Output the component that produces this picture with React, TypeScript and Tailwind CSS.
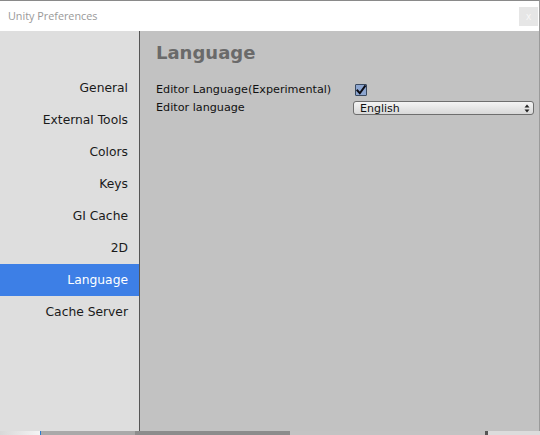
import React from "react";

const items = ["General", "External Tools", "Colors", "Keys", "GI Cache", "2D", "Language", "Cache Server"];

export default function App() {
  return (
    <div className="w-[540px] h-[435px] flex flex-col overflow-hidden bg-[#c2c2c2] font-['DejaVu_Sans',sans-serif]">
      <div className="h-[431px] flex flex-col border-t border-[#8a8a8a] border-r border-r-[#9a9a9a]">
        <div className="h-[30px] bg-white flex items-center justify-between pl-[8px] pr-[1px]">
          <span className="font-['Open_Sans',sans-serif] text-[10.8px] text-[#999]">Unity Preferences</span>
          <div className="w-[19px] h-[19px] bg-[#e6e6e6] flex items-center justify-center text-[10px] leading-none text-[#f8f8f8] font-['Open_Sans',sans-serif]">x</div>
        </div>
        <div className="flex-1 flex">
          <div className="w-[140px] bg-[#dedede] border-r border-[#555] pt-[41px] flex flex-col">
            {items.map((it) => (
              <div
                key={it}
                className={
                  it === "Language"
                    ? "h-[32px] flex items-center justify-end pr-[11px] text-[12.3px] bg-[#3d7fe6] text-white"
                    : "h-[32px] flex items-center justify-end pr-[11px] text-[12.3px] text-[#1a1a1a]"
                }
              >
                {it}
              </div>
            ))}
          </div>
          <div className="flex-1 bg-[#c2c2c2] pl-[16px] pt-[10px] pr-[5px]">
            <div className="text-[18px] font-bold text-[#6a6a6a] leading-[24px] h-[25px]">Language</div>
            <div className="mt-[15px] flex flex-col">
              <div className="h-[18px] flex items-center">
                <span className="w-[197px] text-[11.2px] text-[#111]">Editor Language(Experimental)</span>
                <div className="ml-[2px] w-[12px] h-[12px] border border-[#3a4a60] bg-[#8da6d0] rounded-[1px] flex items-center justify-center">
                  <svg width="11" height="11" viewBox="0 0 11 11">
                    <path d="M1.5 5.5 L4.2 8.5 L9.8 0.8" stroke="#0c0c14" strokeWidth="2.2" fill="none" strokeLinecap="square" />
                  </svg>
                </div>
              </div>
              <div className="h-[18px] flex items-center">
                <span className="w-[197px] text-[11.2px] text-[#111]">Editor language</span>
                <div className="w-[181px] h-[14px] rounded-[3px] border border-[#6e6e6e] bg-gradient-to-b from-[#f4f4f4] to-[#d8d8d8] flex items-center justify-between pl-[6px] pr-[3px]">
                  <span className="text-[11px] text-[#111] leading-none">English</span>
                  <svg width="6" height="9" viewBox="0 0 6 9">
                    <path d="M3 0.5 L5.5 3.5 L0.5 3.5 Z" fill="#222" />
                    <path d="M3 8.5 L5.5 5.5 L0.5 5.5 Z" fill="#222" />
                  </svg>
                </div>
              </div>
            </div>
          </div>
        </div>
      </div>
      <div className="h-[4px] flex">
        <div className="w-[40px] bg-gradient-to-r from-[#d8d8d8] to-[#f4f4f4]" />
        <div className="w-[1px] bg-[#2a7bd0]" />
        <div className="w-[94px] bg-[#a9a9a9]" />
        <div className="w-[155px] bg-[#8c8c8c]" />
        <div className="w-[195px] bg-[#c3c3c3]" />
        <div className="w-[3px] bg-[#555]" />
        <div className="flex-1 bg-[#dcdcdc]" />
      </div>
    </div>
  );
}
